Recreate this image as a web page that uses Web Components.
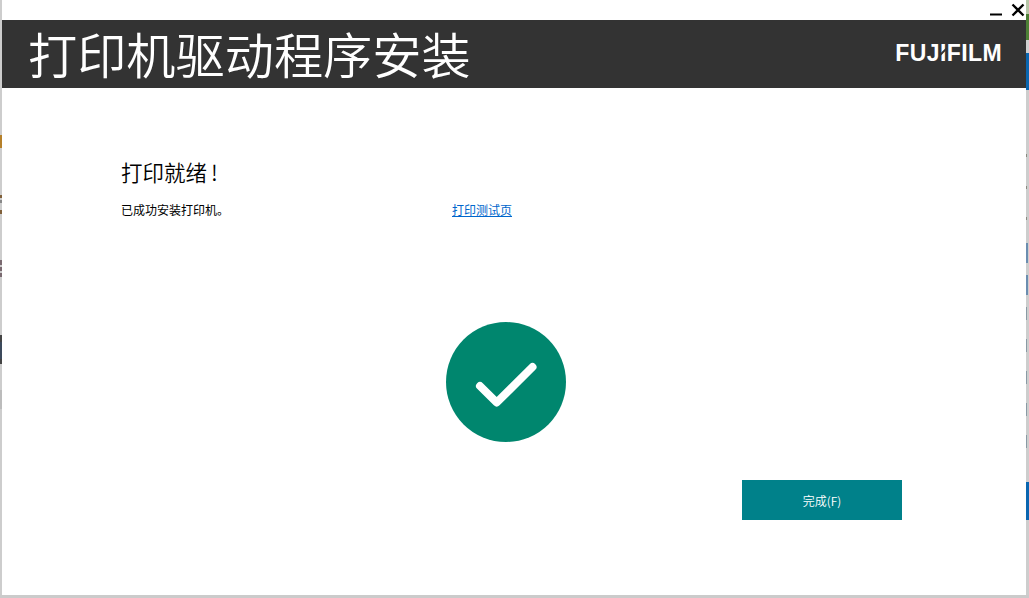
<!DOCTYPE html>
<html lang="zh">
<head>
<meta charset="utf-8">
<title>打印机驱动程序安装</title>
<style>
  html, body { margin: 0; padding: 0; height: 100%; background: #fff; overflow: hidden; }
  body { font-family: "Noto Sans CJK SC", "Liberation Sans", sans-serif; }
</style>
</head>
<body>
<installer-window>
  <title-bar></title-bar>
  <brand-header heading="打印机驱动程序安装"></brand-header>
  <ready-panel></ready-panel>
</installer-window>

<script>
// what shows through at the window edges: [height, colour, width]
const G = '#cdcdcd';
const LEFT_EDGE = [
  [135, G], [13, '#b5802a'], [47, G], [3, '#80603a'], [2, G], [3, '#888'], [7, G], [4, '#80603a'],
  [46, G], [5, '#7a6a70'], [2, G], [4, '#7a6a70'], [2, G], [4, '#7a6a70'],
  [58, G], [7, '#444'], [17, '#3c4a5c'], [5, '#444'], [26, G], [19, '#bcbcbc'], [188, G],
];
const RIGHT_EDGE = [
  [14, '#b7c7a8'], [26, '#4d8036'], [13, '#d0d0d0'], [37, '#0a66b0'],
  [64, G], [3, '#8a8a80', 1], [29, G], [3, '#8a8a80', 1], [28, G], [3, '#8a8a80', 1],
  [23, G], [20, '#6b8db0', 2], [12, G], [20, '#6b8db0', 2],
  [12, G], [13, '#8a9aa5', 1], [19, G], [13, '#8a9aa5', 1], [19, G], [13, '#8a9aa5', 1],
  [19, G], [13, '#8a9aa5', 1], [19, G], [13, '#8a9aa5', 1], [34, G],
  [38, '#0a66b0'], [75, G],
];
const strip = (rows) => rows.map(([h, c, w]) => `<i style="height:${h}px;background:${c}${w ? `;width:${w}px` : ''}"></i>`).join('');

class InstallerWindow extends HTMLElement {
  constructor() {
    super();
    this.attachShadow({ mode: 'open' }).innerHTML = `
      <style>
        :host {
          display: grid;
          grid-template-columns: 2px 1fr 3px;
          grid-template-rows: 595px 3px;
          width: 1029px;
          height: 598px;
        }
        .main { display: flex; flex-direction: column; background: #fff; min-width: 0; }
        .left, .right { display: flex; flex-direction: column; overflow: hidden; background: ${G}; }
        .bottom { grid-column: 1 / 4; background: #cbcbcb; }
        i { display: block; flex: none; }
      </style>
      <div class="left">${strip(LEFT_EDGE)}</div>
      <div class="main"><slot></slot></div>
      <div class="right">${strip(RIGHT_EDGE)}</div>
      <div class="bottom"></div>
    `;
  }
}

class TitleBar extends HTMLElement {
  constructor() {
    super();
    this.attachShadow({ mode: 'open' }).innerHTML = `
      <style>
        :host { display: flex; justify-content: flex-end; align-items: flex-start; height: 20px; background: #fff; }
        svg { display: block; }
      </style>
      <svg width="36" height="20" viewBox="0 0 36 20">
        <path d="M0 14.500h12" stroke="#000" stroke-width="2" fill="none"/>
        <path d="M22.500 4.500 L33.500 15.500 M33.500 4.500 L22.500 15.500" stroke="#000" stroke-width="2.300" fill="none"/>
      </svg>
    `;
  }
}

class BrandHeader extends HTMLElement {
  constructor() {
    super();
    this.attachShadow({ mode: 'open' });
  }

  connectedCallback() {
    this.shadowRoot.innerHTML = `
      <style>
        :host {
          display: flex;
          align-items: center;
          justify-content: space-between;
          height: 68px;
          padding: 0 24px 0 26px;
          background: #333;
          color: #fff;
        }
        h1 { margin: 0; font-weight: 350; font-size: 49.200px; line-height: 68px; white-space: nowrap; position: relative; top: -1px; }
        .logo {
          font-family: "Liberation Sans", Arial, sans-serif;
          font-weight: 700;
          font-size: 23px;
          letter-spacing: 0.4px;
          line-height: 1;
          position: relative;
          top: -1px;
        }
        .cut { position: relative; display: inline-block; }
        .cut::after {
          content: '';
          position: absolute;
          left: -2px;
          top: 9px;
          width: 10px;
          height: 1.500px;
          background: #333;
          transform: rotate(-45deg);
        }
      </style>
      <h1>${this.getAttribute('heading')}</h1>
      <span class="logo">FUJ<span class="cut">I</span>FILM</span>
    `;
  }
}

class ReadyPanel extends HTMLElement {
  constructor() {
    super();
    this.attachShadow({ mode: 'open' }).innerHTML = `
      <style>
        :host { display: flex; flex-direction: column; flex: 1; padding: 69px 124px 0 119px; color: #000; }
        h2 { margin: 0; font-weight: 350; font-size: 21.500px; line-height: 30px; }
        h2 span { margin-left: 4px; }
        .row { display: grid; grid-template-columns: 331px 1fr; margin-top: 14px; font-size: 12px; line-height: 18px; }
        a { color: #0066cc; text-decoration: underline; }
        .ok { align-self: flex-start; margin: 103px 0 0 325px; display: block; }
        .actions { display: flex; justify-content: flex-end; margin-top: 38px; }
      </style>
      <h2>打印就绪<span>!</span></h2>
      <div class="row"><span>已成功安装打印机。</span><a href="#">打印测试页</a></div>
      <svg class="ok" width="120" height="120" viewBox="0 0 120 120">
        <circle cx="60" cy="60" r="60" fill="#00866e"/>
        <path d="M34 64 L50.700 80.500 L86.500 45" fill="none" stroke="#fff" stroke-width="8" stroke-linecap="round" stroke-linejoin="round"/>
      </svg>
      <div class="actions"><finish-button>完成(F)</finish-button></div>
    `;
  }
}

class FinishButton extends HTMLElement {
  constructor() {
    super();
    this.attachShadow({ mode: 'open' }).innerHTML = `
      <style>
        :host {
          display: flex;
          align-items: center;
          justify-content: center;
          width: 160px;
          height: 40px;
          background: #00818a;
          color: #fff;
          font-size: 12px;
          font-weight: 350;
        }
      </style>
      <slot></slot>
    `;
  }
}

customElements.define('installer-window', InstallerWindow);
customElements.define('title-bar', TitleBar);
customElements.define('brand-header', BrandHeader);
customElements.define('ready-panel', ReadyPanel);
customElements.define('finish-button', FinishButton);
</script>
</body>
</html>
